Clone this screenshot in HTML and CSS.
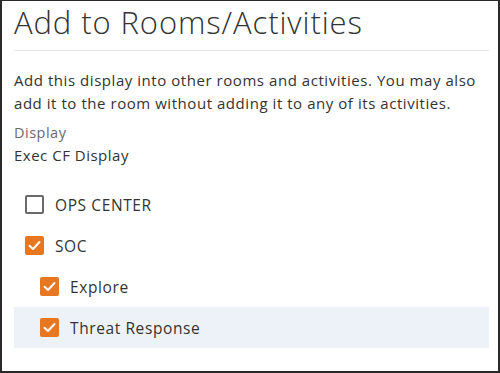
FILE: index.html
```html
<!DOCTYPE html>
<html>
<head>
<meta charset="utf-8">
<link rel="stylesheet" href="styles.css">
</head>
<body>
<div class="frame">
  <h1 class="title">Add to Rooms/Activities</h1>
  <div class="divider"></div>
  <p class="desc">Add this display into other rooms and activities. You may also add it to the room without adding it to any of its activities.</p>
  <div class="field">
    <div class="label">Display</div>
    <div class="value">Exec CF Display</div>
  </div>
  <ul class="list">
    <li class="row"><span class="box"></span><span class="text">OPS CENTER</span></li>
    <li class="row"><span class="box checked"><svg viewBox="0 0 19 19" width="19" height="19"><path d="M4.5 9.8 L8 13 L14.5 6" fill="none" stroke="#fff" stroke-width="2" stroke-linecap="round" stroke-linejoin="round"/></svg></span><span class="text">SOC</span></li>
    <li class="row sub"><span class="box checked"><svg viewBox="0 0 19 19" width="19" height="19"><path d="M4.5 9.8 L8 13 L14.5 6" fill="none" stroke="#fff" stroke-width="2" stroke-linecap="round" stroke-linejoin="round"/></svg></span><span class="text">Explore</span></li>
    <li class="row sub active"><span class="box checked"><svg viewBox="0 0 19 19" width="19" height="19"><path d="M4.5 9.8 L8 13 L14.5 6" fill="none" stroke="#fff" stroke-width="2" stroke-linecap="round" stroke-linejoin="round"/></svg></span><span class="text">Threat Response</span></li>
  </ul>
</div>
</body>
</html>
```
FILE: styles.css
```css
html, body {
  margin: 0;
  padding: 0;
  background: #fff;
}
.frame {
  box-sizing: border-box;
  width: 500px;
  height: 373px;
  border: 2px solid #2a2a2a;
  border-top-width: 1px;
  padding: 0 9px 0 12px;
  font-family: "Open Sans", "Lato", sans-serif;
  color: #333;
  overflow: hidden;
}
.title {
  margin: 0;
  font-size: 31px;
  font-weight: 300;
  line-height: 42px;
  color: #333;
  letter-spacing: 0.9px;
}
.divider {
  height: 1px;
  background: #e6e6e6;
  margin-top: 7px;
}
.desc {
  margin: 18px 0 0;
  font-size: 15px;
  line-height: 23px;
  color: #333;
  letter-spacing: 0.55px;
}
.field {
  margin-top: 7px;
}
.label {
  font-size: 14.5px;
  line-height: 22px;
  color: #6b6b6b;
  letter-spacing: 0.5px;
}
.value {
  font-size: 15px;
  line-height: 22px;
  color: #333;
  letter-spacing: 0.5px;
}
.list {
  list-style: none;
  margin: 18px 0 0;
  padding: 0;
}
.row {
  display: flex;
  align-items: center;
  height: 41px;
  padding-left: 11px;
  font-size: 15.5px;
  letter-spacing: 0.6px;
}
.row.sub {
  padding-left: 26px;
}
.row.active {
  background: #edf2f9;
}
.box {
  box-sizing: border-box;
  width: 19px;
  height: 19px;
  border: 2px solid #6a6a6a;
  border-radius: 2px;
  margin-right: 11px;
  flex: none;
  display: flex;
}
.box.checked {
  background: #e87722;
  border: none;
}
.text {
  color: #333;
}
```
